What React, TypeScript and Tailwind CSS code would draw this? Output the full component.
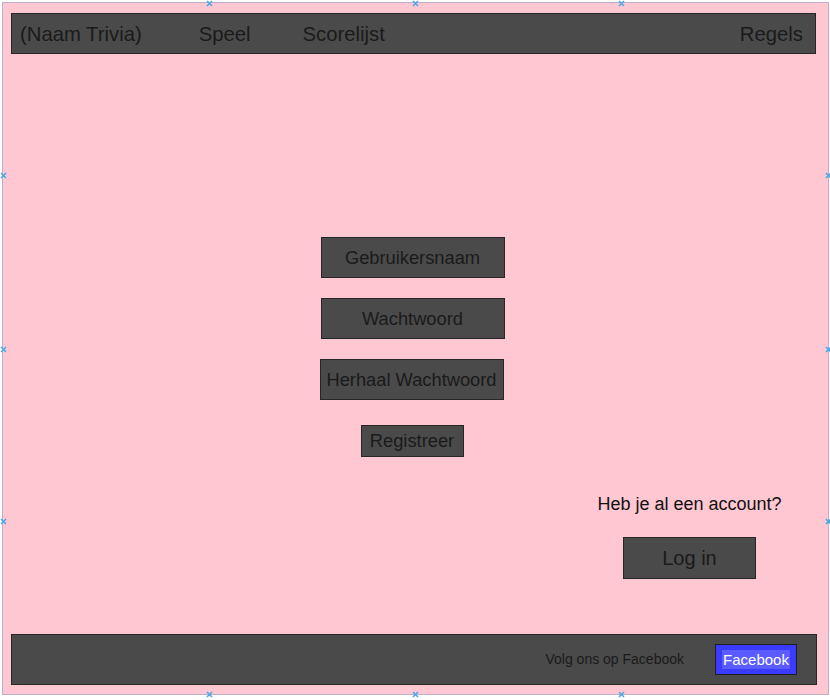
import React from "react";

const Marker = ({ className }: { className: string }) => (
  <svg
    className={`absolute ${className}`}
    width="7"
    height="7"
    viewBox="0 0 7 7"
  >
    <path d="M1 1L6 6M6 1L1 6" stroke="#49a8e8" strokeWidth="1.6" />
  </svg>
);

const Box = ({ children, className }: { children: React.ReactNode; className: string }) => (
  <div
    className={`flex items-center justify-center bg-[#4a4a4a] border border-[#262626] text-[#1a1a1a] ${className}`}
  >
    {children}
  </div>
);

export default function App() {
  return (
    <div
      className="relative w-[830px] h-[700px] bg-white pt-[2px] pl-[2px]"
      style={{ fontFamily: '"Liberation Sans", Arial, sans-serif' }}
    >
      <div className="relative w-[827px] h-[693px] border border-[#bcaecd] bg-[#ffc7d2] flex flex-col pl-[8px] pt-[10px] pb-[9px]">
        {/* Header */}
        <div className="w-[805px] h-[41px] bg-[#4a4a4a] border border-[#262626] flex items-center pl-[8px] pr-[12px] pt-[2px] text-[20.3px] text-[#1a1a1a]">
          <span>(Naam Trivia)</span>
          <span className="ml-[57px]">Speel</span>
          <span className="ml-[52px]">Scorelijst</span>
          <span className="ml-auto">Regels</span>
        </div>

        {/* Registration form */}
        <div className="w-[805px] flex flex-col items-center mt-[183px]">
          <Box className="w-[184px] h-[41px] text-[18.3px] -ml-[2px]">Gebruikersnaam</Box>
          <Box className="w-[184px] h-[41px] text-[18.3px] mt-[20px] -ml-[2px]">Wachtwoord</Box>
          <Box className="w-[184px] h-[41px] text-[18.3px] mt-[20px] -ml-[4px]">Herhaal Wachtwoord</Box>
          <Box className="w-[103px] h-[32px] text-[18.3px] mt-[25px] -ml-[3px]">Registreer</Box>
        </div>

        {/* Login */}
        <div className="w-[805px] flex justify-end pr-[25px] mt-[36px]">
          <div className="flex flex-col items-center w-[200px]">
            <div className="text-[18px] text-[#111] leading-[22px] -ml-[3px]">Heb je al een account?</div>
            <Box className="w-[133px] h-[42px] text-[20px] mt-[22px] -ml-[3px]">Log in</Box>
          </div>
        </div>

        {/* Footer */}
        <div className="mt-auto w-[806px] h-[51px] bg-[#4a4a4a] border border-[#262626] flex items-center justify-end pr-[19px]">
          <span className="text-[14px] text-[#1a1a1a]">Volg ons op Facebook</span>
          <div className="ml-[31px] w-[82px] h-[31px] bg-[#3b3bff] border border-[#1e1e1e] flex items-center justify-center">
            <span className="bg-[#5a5cff] text-white text-[15px] leading-[19px] px-[1px]">Facebook</span>
          </div>
        </div>
      </div>

      {/* Selection markers */}
      <Marker className="left-[206px] top-0" />
      <Marker className="left-[412px] top-0" />
      <Marker className="left-[618px] top-0" />
      <Marker className="left-[206px] top-[691px]" />
      <Marker className="left-[412px] top-[691px]" />
      <Marker className="left-[618px] top-[691px]" />
      <Marker className="left-0 top-[172px]" />
      <Marker className="left-0 top-[346px]" />
      <Marker className="left-0 top-[518px]" />
      <Marker className="left-[825px] top-[172px]" />
      <Marker className="left-[825px] top-[346px]" />
      <Marker className="left-[825px] top-[518px]" />
    </div>
  );
}
